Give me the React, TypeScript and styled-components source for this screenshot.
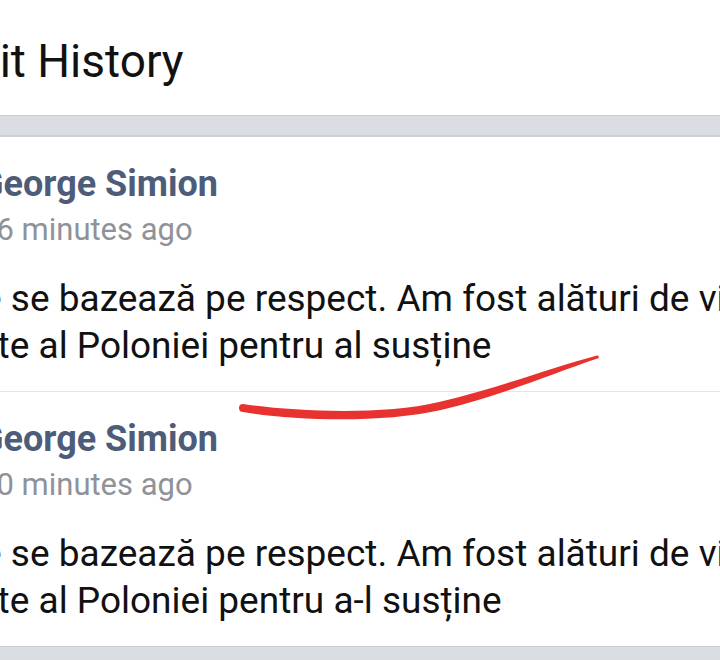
import * as React from 'react';
import styled, { createGlobalStyle } from 'styled-components';
import { ArrowLeft } from 'lucide-react';

interface Revision {
    id: number;
    author: string;
    time: string;
    lines: string[];
}

const revisions: Revision[] = [
    {
        id: 1,
        author: 'George Simion',
        time: '16 minutes ago',
        lines: [
            'Amicițiile se bazează pe respect. Am fost alături de viitorul',
            'președinte al Poloniei pentru al susține',
        ],
    },
    {
        id: 2,
        author: 'George Simion',
        time: '10 minutes ago',
        lines: [
            'Amicițiile se bazează pe respect. Am fost alături de viitorul',
            'președinte al Poloniei pentru a-l susține',
        ],
    },
];

const GlobalStyle = createGlobalStyle`
html, body {
    margin: 0;
    padding: 0;
    background: #ffffff;
}
body {
    font-family: Roboto, "Liberation Sans", sans-serif;
}
`

const Entry = (props: { revision: Revision, last: boolean }) => {
    return <StyledEntry last={props.last}>
        <StyledHead>
            <StyledAvatar />
            <div>
                <StyledAuthor>{props.revision.author}</StyledAuthor>
                <StyledTime>{props.revision.time}</StyledTime>
            </div>
        </StyledHead>
        <StyledBody>
            {props.revision.lines.map((line, i) => <React.Fragment key={i}>
                {i > 0 && <br />}
                {line}
            </React.Fragment>)}
        </StyledBody>
    </StyledEntry>
}

// hand-drawn red underline over the first revision, thinning towards the right
const Scribble = () => {
    return <StyledScribble width="720" height="660" viewBox="0 0 720 660">
        <path d="M243 404 C 290 411, 380 416, 439 402 C 499 388, 550 368, 597 355.5
                 A 1.5 1.5 0 0 1 597.5 358.5
                 C 551 374, 501 396, 441 410 C 380 424, 290 420, 243 412
                 A 4 4 0 0 1 243 404 Z"
            fill="#e8322f" />
    </StyledScribble>
}

const App = () => {
    return <StyledViewport>
        <GlobalStyle />
        <StyledSheet>
            <StyledHeader>
                <StyledBack><ArrowLeft size={48} strokeWidth={2} /></StyledBack>
                <StyledTitle>Edit History</StyledTitle>
            </StyledHeader>
            <StyledBand />
            <StyledCard>
                {revisions.map((r, i) => <Entry key={r.id} revision={r} last={i === revisions.length - 1} />)}
            </StyledCard>
            <StyledBand />
        </StyledSheet>
        <Scribble />
    </StyledViewport>
}

const StyledViewport = styled.div`
position: relative;
width: 720px;
height: 660px;
overflow: hidden;
background: #ffffff;
`

const StyledSheet = styled.div`
margin-left: -176px;
width: 1200px;
`

const StyledHeader = styled.header`
display: flex;
align-items: flex-start;
gap: 40px;
height: 115px;
box-sizing: border-box;
padding: 35px 0 0 36px;
`

const StyledBack = styled.div`
display: flex;
color: #1c1e21;
padding-top: 2px;
`

const StyledTitle = styled.h1`
margin: 0;
font-size: 46px;
line-height: 52px;
font-weight: 400;
color: #111111;
`

const StyledBand = styled.div`
height: 22px;
box-sizing: border-box;
background: #dadde1;
border-top: 1px solid #c9ccd1;
border-bottom: 2px solid #cdd0d4;
`

const StyledCard = styled.div`
background: #ffffff;
`

const StyledEntry = styled.div<{ last: boolean }>`
padding: 25px 0 23px 32px;
border-bottom: ${p => p.last ? 'none' : '1px solid #e3e4e6'};
`

const StyledHead = styled.div`
display: flex;
align-items: flex-start;
gap: 35px;
`

const StyledAvatar = styled.div`
width: 88px;
height: 88px;
border-radius: 50%;
background: #d8dade;
flex-shrink: 0;
`

const StyledAuthor = styled.div`
font-size: 36px;
line-height: 44px;
font-weight: 700;
color: #4d5c78;
`

const StyledTime = styled.div`
padding-top: 3px;
font-size: 31px;
line-height: 41px;
color: #8f9298;
`

const StyledBody = styled.p`
margin: 25px 0 -1px;
font-size: 37px;
line-height: 47px;
text-indent: -7px;
white-space: nowrap;
color: #111111;
`

const StyledScribble = styled.svg`
position: absolute;
top: 0;
left: 0;
pointer-events: none;
`

export default App;
